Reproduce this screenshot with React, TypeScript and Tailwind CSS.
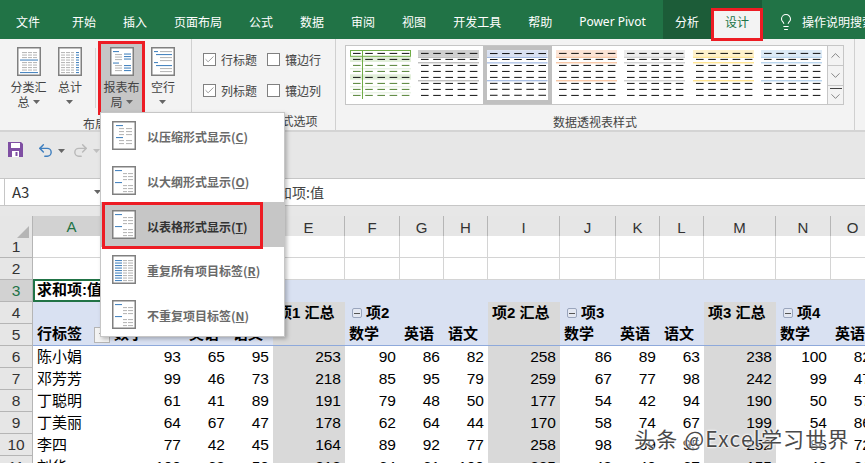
import { Check, ChevronDown, ChevronUp, Lightbulb, Redo2, Undo2 } from "lucide-react";
import React from "react";

const BLUE = "#4a86c0";
const GR = "#b9b9b9";

type Seg = [number, number, number, string];

function Doc({ segs, w = 24, h = 29 }: { segs: Seg[]; w?: number; h?: number }) {
  return (
    <svg width={w} height={h} viewBox="0 0 24 29" className="block shrink-0">
      <rect x="0.75" y="0.75" width="22.5" height="27.5" fill="#fff" stroke="#808080" strokeWidth="1.5" />
      {segs.map(([x, y, l, c], i) => (
        <rect key={i} x={x} y={y} width={l} height="1.1" fill={c} />
      ))}
    </svg>
  );
}

const rowsY = [5, 7.5, 10, 12.5, 15, 17.5, 20, 22.5, 25];
const subtotalIcon: Seg[] = rowsY.flatMap((y, i): Seg[] =>
  i === 3 || i === 8
    ? [[3, y, 18, BLUE]]
    : [[5, y, 5, GR], [11, y, 4, GR], [16, y, 4, GR]]
);
const totalIcon: Seg[] = rowsY.flatMap((y): Seg[] => [[3, y, 4, GR], [8, y, 4, GR], [13, y, 3, GR], [18, y, 3, BLUE]]);
const layoutIcon: Seg[] = [
  [3, 4, 6, BLUE], [14, 6.5, 7, BLUE], [14, 9, 7, BLUE], [14, 11.5, 7, BLUE],
  [5, 7, 7, GR], [5, 9.5, 7, GR], [5, 12, 7, GR],
  [3, 15.5, 6, BLUE], [5, 18, 7, GR], [14, 18, 7, BLUE], [5, 20.5, 7, GR], [14, 20.5, 7, BLUE], [5, 23, 7, GR], [14, 23, 7, BLUE],
];
const blankIcon: Seg[] = [
  [3, 4, 4, BLUE], [9, 4, 12, GR], [5, 7, 16, BLUE], [9, 10, 12, GR],
  [9, 13, 12, GR], [3, 15, 4, BLUE], [5, 18, 16, BLUE], [9, 21, 12, GR], [9, 24, 12, GR],
];
const compactIcon: Seg[] = [
  [4, 4, 7, BLUE], [7, 7, 5, GR], [14, 7, 6, GR], [7, 10, 5, GR], [14, 10, 6, GR], [7, 13, 5, GR], [14, 13, 6, GR],
  [4, 16, 7, BLUE], [7, 19, 5, GR], [14, 19, 6, GR], [7, 22, 5, GR], [14, 22, 6, GR],
];
const outlineIcon: Seg[] = [
  [3, 4, 7, BLUE], [11, 7, 4, GR], [16, 7, 5, GR], [11, 10, 4, GR], [16, 10, 5, GR], [11, 13, 4, GR], [16, 13, 5, GR],
  [3, 16, 7, BLUE], [11, 19, 4, GR], [16, 19, 5, GR], [11, 22, 4, GR], [16, 22, 5, GR], [11, 25, 4, GR], [16, 25, 5, GR],
];
const repeatIcon: Seg[] = rowsY.flatMap((y): Seg[] => [[3, y, 7, BLUE], [11, y, 4, GR], [16, y, 5, GR]]);

function Caret({ className = "" }: { className?: string }) {
  return (
    <svg width="7" height="4" viewBox="0 0 7 4" className={className}>
      <path d="M0 0h7L3.5 4z" fill="#666" />
    </svg>
  );
}

function RibbonButton({ segs, lines, width, top = "pt-[8px]" }: { segs: Seg[]; lines: React.ReactNode[]; width: string; top?: string }) {
  return (
    <div className={`flex flex-col items-center text-[12px] leading-[15px] text-[#444] ${top} ${width}`}>
      <Doc segs={segs} />
      <div className="mt-[3px] flex flex-col items-center">
        {lines.map((l, i) => (
          <div key={i} className="flex items-center gap-[3px] whitespace-nowrap">{l}</div>
        ))}
      </div>
    </div>
  );
}

function CheckItem({ label, on, w }: { label: string; on?: boolean; w: string }) {
  return (
    <div className={`flex items-center gap-[5px] text-[12px] text-[#444] ${w}`}>
      <span className="flex h-[13px] w-[13px] items-center justify-center border border-[#808080] bg-white">
        {on && <Check size={11} strokeWidth={1.6} color="#777" />}
      </span>
      <span className="whitespace-nowrap">{label}</span>
    </div>
  );
}

function Thumb({ band, line, selected }: { band: string; line: string; selected?: boolean }) {
  const ys = [3.3, 9.3, 15.3, 21.3, 27.3, 33.3, 39.3, 45.3];
  const inner = (
    <svg width="61" height="50" viewBox="0 0 61 50" className="block">
      <rect x="0" y="0" width="61" height="6.5" fill={band} />
      {[6.7, 12.3, 30.3].map((y) => (
        <rect key={y} x="0" y={y} width="61" height="1" fill={line} />
      ))}
      {ys.flatMap((y) =>
        [3, 15.2, 27.4, 39.6, 51.8].map((x) => <rect key={`${x}-${y}`} x={x} y={y - 0.4} width="7.6" height="1" fill="#111" />)
      )}
    </svg>
  );
  return selected ? (
    <div className="flex h-[58px] w-[68.6px] shrink-0 items-center justify-center border-[4px] border-[#c0c0c0] bg-white">{inner}</div>
  ) : (
    <div className="flex h-[58px] w-[68.6px] shrink-0 items-center justify-center">{inner}</div>
  );
}

function GreenThumb() {
  const ys: [number, string][] = [[3.3, "#111"], [9.3, "#111"], [15.3, "#548235"], [21.3, "#548235"], [27.3, "#111"], [33.3, "#548235"], [39.3, "#548235"], [45.3, "#548235"]];
  return (
    <div className="flex h-[58px] w-[68.6px] shrink-0 items-center justify-center">
      <svg width="61" height="50" viewBox="0 0 61 50" className="block">
        <rect x="0" y="6.7" width="61" height="5.3" fill="#e2efda" />
        <rect x="0" y="24.3" width="61" height="5.4" fill="#e2efda" />
        {[18.3, 36.3, 42.3].map((y) => (
          <rect key={y} x="0" y={y} width="61" height="1" fill="#e2efda" />
        ))}
        <rect x="0.5" y="0.5" width="60" height="5.8" fill="#fff" stroke="#70ad47" />
        <rect x="12" y="0" width="1" height="49" fill="#70ad47" />
        {ys.flatMap(([y, c]) =>
          [3, 15.2, 27.4, 39.6, 51.8].map((x) => <rect key={`${x}-${y}`} x={x} y={y - 0.4} width="7.6" height="1" fill={c} />)
        )}
      </svg>
    </div>
  );
}

function MenuItem({ segs, text, mn, active }: { segs: Seg[]; text: string; mn: string; active?: boolean }) {
  return (
    <div className={`relative flex h-[44.7px] items-center gap-[11px] pl-[11px] text-[12px] font-bold ${active ? "bg-[#c6c6c6] text-[#333]" : "text-[#6a6a6a]"}`}>
      <Doc segs={segs} />
      <span className="whitespace-nowrap pt-[4px]">
        {text}(<span className="underline">{mn}</span>)
      </span>
      {active && <div className="absolute left-[1px] top-0 h-[47px] w-[161px] border-[3px] border-[#ed1c24]" />}
    </div>
  );
}

const COLS = "grid w-[875px] grid-cols-[33px_77px_75px_44px_44px_72px_55px_44px_44px_72px_56px_44px_44px_72px_55px_44px]";
const LETTERS = ["A", "B", "C", "D", "E", "F", "G", "H", "I", "J", "K", "L", "M", "N", "O"];
const SUMMARY = [4, 8, 12];

const DATA: (string | number)[][] = [
  ["陈小娟", 93, 65, 95, 253, 90, 86, 82, 258, 86, 89, 63, 238, 100, 82],
  ["邓芳芳", 99, 46, 73, 218, 85, 95, 79, 259, 67, 77, 98, 242, 99, 47],
  ["丁聪明", 61, 41, 89, 191, 79, 48, 50, 177, 54, 42, 94, 190, 50, 57],
  ["丁美丽", 64, 67, 47, 178, 62, 64, 44, 170, 58, 74, 67, 199, 54, 86],
  ["李四", 77, 42, 45, 164, 89, 92, 77, 258, 98, 59, 95, 252, 86, 72],
  ["刘华", 100, 68, 50, 218, 64, 61, 100, 225, 48, 40, 67, 155, 48, 81],
];

function RowHead({ n, active }: { n: number; active?: boolean }) {
  return (
    <div className={`flex h-[22px] items-center justify-center border-b border-r border-[#b5b5b5] text-[15.5px] ${active ? "bg-[#d2d2d2] text-[#217346]" : "bg-[#e6e6e6] text-[#333]"}`}>
      {n}
    </div>
  );
}

function Minus() {
  return (
    <span className="mr-[4px] flex h-[10px] w-[10px] shrink-0 items-center justify-center rounded-[2px] border border-[#9aa5bd] bg-[#e4e8f2]">
      <span className="h-px w-[6px] bg-[#555]" />
    </span>
  );
}

export default function App() {
  return (
    <div className="relative h-[463px] w-[865px] overflow-hidden bg-[#e7e7e7] [font-family:'Noto_Sans_CJK_SC','Noto_Sans',sans-serif]">
      {/* tab bar */}
      <div className="flex h-[39px] items-stretch bg-[#217346] text-[12px] text-white">
        <div className="flex w-[663px] shrink-0 items-center gap-[27px] pl-[16px] pt-[5px]">
          <span className="mr-[5px]">文件</span>
          <span>开始</span>
          <span>插入</span>
          <span>页面布局</span>
          <span>公式</span>
          <span>数据</span>
          <span>审阅</span>
          <span>视图</span>
          <span>开发工具</span>
          <span>帮助</span>
          <span className="whitespace-nowrap [font-family:'Noto_Sans',sans-serif]">Power Pivot</span>
        </div>
        <div className="flex w-[99px] shrink-0 items-stretch bg-[#1c5c38]">
          <span className="ml-[12px] flex shrink-0 items-center whitespace-nowrap pt-[5px]">分析</span>
          <div className="relative ml-[14px] mt-[10px] flex h-[29px] w-[48px] shrink-0 items-center justify-center bg-[#f3f3f3] pb-[5px] text-[#217346]">
            设计
            <div className="absolute -inset-[2px] border-[3px] border-[#ed1c24]" />
          </div>
        </div>
        <div className="ml-[15px] flex items-center pt-[5px]">
          <Lightbulb size={18} strokeWidth={1.4} color="#fff" />
        </div>
        <span className="ml-[7px] flex items-center whitespace-nowrap pt-[5px]">操作说明搜索</span>
      </div>

      {/* ribbon */}
      <div className="flex h-[93px] border-b-2 border-[#d4d4d4] bg-[#f3f3f3]">
        <div className="flex w-[192px] shrink-0 flex-col border-r border-[#d0d0d0]">
          <div className="flex h-[75px] items-start pl-[5px]">
            <RibbonButton segs={subtotalIcon} lines={["分类汇", <>总<Caret /></>]} width="w-[47px]" />
            <RibbonButton segs={totalIcon} lines={["总计", <Caret className="mt-[6px]" />]} width="w-[36px]" />
            <div className="ml-[7px] mr-[1px] mt-[9px] h-[60px] w-px bg-[#d6d6d6]" />
            <div className="ml-[1px] mt-[2px] h-[74px] w-[47px] border-[3px] border-[#ed1c24] bg-[#c6c6c6]">
              <div className="-mx-[3px]">
                <RibbonButton segs={layoutIcon} lines={["报表布", <>局<Caret /></>]} width="w-[47px]" top="pt-[3px]" />
              </div>
            </div>
            <RibbonButton segs={blankIcon} lines={["空行", <Caret className="mt-[6px]" />]} width="w-[36px]" />
          </div>
          <div className="pl-[83px] pt-[1px] text-[12px] text-[#444]">布局</div>
        </div>
        <div className="flex w-[144px] shrink-0 flex-col border-r border-[#d0d0d0]">
          <div className="grid h-[75px] grid-cols-[64px_70px] content-start gap-y-[16px] pl-[11px] pt-[13px]">
            <CheckItem label="行标题" on w="h-[15px]" />
            <CheckItem label="镶边行" w="h-[15px]" />
            <CheckItem label="列标题" on w="h-[15px]" />
            <CheckItem label="镶边列" w="h-[15px]" />
          </div>
          <div className="pt-[1px] text-center text-[12px] text-[#444]">数据透视表样式选项</div>
        </div>
        <div className="flex w-[519px] shrink-0 flex-col border-r border-[#d0d0d0]">
          <div className="ml-[9px] mt-[6px] flex h-[60px] w-[499px] border border-[#c6c6c6] bg-white">
            <GreenThumb />
            <Thumb band="#d0d0d0" line="#a6a6a6" />
            <Thumb band="#d9e1f2" line="#8eaadb" selected />
            <Thumb band="#fce4d6" line="#f4b183" />
            <Thumb band="#ededed" line="#c0c0c0" />
            <Thumb band="#fff2cc" line="#ffd966" />
            <Thumb band="#ddebf7" line="#9dc3e6" />
            <div className="ml-auto flex w-[16px] flex-col border-l border-[#c6c6c6] bg-[#f3f3f3]">
              <div className="flex h-[20px] items-center justify-center border-b border-[#c6c6c6]">
                <ChevronUp size={15} strokeWidth={1} color="#444" />
              </div>
              <div className="flex h-[20px] items-center justify-center border-b border-[#c6c6c6]">
                <ChevronDown size={15} strokeWidth={1} color="#444" />
              </div>
              <div className="flex flex-1 flex-col items-center">
                <div className="mt-[2px] h-px w-[12px] bg-[#444]" />
                <ChevronDown size={15} strokeWidth={1} color="#444" />
              </div>
            </div>
          </div>
          <div className="pt-[8px] text-center text-[12px] text-[#444]">数据透视表样式</div>
        </div>
      </div>

      {/* quick access */}
      <div className="flex h-[46px] items-start pl-[8px] pt-[10px]">
        <svg width="15" height="15" viewBox="0 0 15 15" className="block">
          <path d="M0 0h13l2 2v13H0z" fill="#7f4fa3" />
          <rect x="3" y="1" width="9" height="5" fill="#fff" />
          <rect x="4" y="9" width="7" height="6" fill="#fff" />
          <rect x="7.5" y="10" width="2" height="4" fill="#7f4fa3" />
        </svg>
        <Undo2 size={17} strokeWidth={2} color="#3f7fbf" className="ml-[14px]" />
        <Caret className="ml-[4px] mt-[7px]" />
        <Redo2 size={17} strokeWidth={2} color="#b9b9b9" className="ml-[7px]" />
        <svg width="7" height="4" viewBox="0 0 7 4" className="ml-[4px] mt-[7px]">
          <path d="M0 0h7L3.5 4z" fill="#c0c0c0" />
        </svg>
      </div>

      {/* formula bar */}
      <div className="flex h-[28px] border-y border-[#c6c6c6] bg-white">
        <div className="-my-px ml-[4px] flex w-[100px] items-center justify-between border border-[#c6c6c6] bg-white pl-[7px] pr-[2px] text-[15px] text-[#333]">
          <span>A3</span>
          <Caret />
        </div>
        <div className="flex flex-1 items-center pl-[160px] text-[14px] text-[#444]">求和项:值</div>
      </div>
      <div className="h-[10px]" />

      {/* sheet */}
      <div className="[font-family:'Liberation_Sans','Noto_Sans_CJK_SC',sans-serif]">
        <div className={`${COLS} h-[20px]`}>
          <div className="relative border-r border-[#b5b5b5] bg-[#e6e6e6]">
            <svg width="12" height="12" viewBox="0 0 12 12" className="absolute bottom-[3px] right-[3px]">
              <path d="M12 0v12H0z" fill="#b5b5b5" />
            </svg>
          </div>
          {LETTERS.map((l, i) => (
            <div
              key={l}
              className={`flex items-center justify-center border-b text-[15px] ${i === 0 ? "border-b-2 border-[#217346] bg-[#d2d2d2] text-[#217346]" : "border-b-[#9a9a9a] border-r border-r-[#b5b5b5] bg-[#e6e6e6] text-[#333]"}`}
            >
              {l}
            </div>
          ))}
        </div>

        {[1, 2].map((n) => (
          <div key={n} className={COLS}>
            <RowHead n={n} />
            {LETTERS.map((l) => (
              <div key={l} className="h-[22px] border-b border-r border-[#d4d4d4] bg-white" />
            ))}
          </div>
        ))}

        <div className={COLS}>
          <RowHead n={3} active />
          <div className="col-span-2 h-[22px] bg-[#d9e1f2]">
            <div className="flex h-[23px] w-[77px] -translate-y-px items-center whitespace-nowrap border-2 border-[#217346] bg-white pl-[2px] text-[15px] font-bold text-black">
              求和项:值
            </div>
          </div>
          <div className="col-span-13 h-[22px] bg-[#d9e1f2]" />
        </div>

        <div className={COLS}>
          <RowHead n={4} />
          {LETTERS.map((l, i) => {
            const sum = SUMMARY.indexOf(i);
            const item = [5, 9, 13].indexOf(i);
            return (
              <div key={l} className={`flex h-[22px] items-center whitespace-nowrap text-[15px] font-bold text-black ${sum >= 0 ? "bg-[#d9d9d9] pl-[4px]" : "bg-[#d9e1f2] pl-[7px]"}`}>
                {sum >= 0 && `项${sum + 1} 汇总`}
                {item >= 0 && (
                  <>
                    <Minus />项{item + 2}
                  </>
                )}
              </div>
            );
          })}
        </div>

        <div className={COLS}>
          <RowHead n={5} />
          {LETTERS.map((l, i) => {
            const sum = SUMMARY.includes(i);
            const sub = ["数学", "英语", "语文"][(i - 1) % 4];
            return (
              <div key={l} className={`relative flex h-[22px] items-center whitespace-nowrap border-b border-[#8ea9db] pl-[4px] text-[15px] font-bold text-black ${sum ? "bg-[#d9d9d9]" : "bg-[#d9e1f2]"}`}>
                {i === 0 ? (
                  <>
                    行标签
                    <span className="absolute left-[61px] top-[3px] flex h-[16px] w-[16px] items-center justify-center border border-[#b5b5b5] bg-[#f3f3f3]">
                      <Caret />
                    </span>
                  </>
                ) : sum ? null : (
                  sub
                )}
              </div>
            );
          })}
        </div>

        {DATA.map((r, ri) => (
          <div key={ri} className={COLS}>
            <RowHead n={ri + 6} />
            {r.map((v, i) => (
              <div
                key={i}
                className={`flex h-[22px] items-center whitespace-nowrap text-black ${i === 0 ? "pl-[4px] text-[15px]" : "justify-end pr-[4px] text-[15.5px]"} ${SUMMARY.includes(i) ? "bg-[#d9d9d9]" : "bg-white"}`}
              >
                {v}
              </div>
            ))}
          </div>
        ))}
      </div>

      {/* dropdown menu */}
      <div className="absolute left-[100px] top-[112px] w-[185px] border border-[#c6c6c6] bg-white shadow-[2px_2px_4px_rgba(0,0,0,0.25)]">
        <MenuItem segs={compactIcon} text="以压缩形式显示" mn="C" />
        <MenuItem segs={outlineIcon} text="以大纲形式显示" mn="O" />
        <MenuItem segs={outlineIcon} text="以表格形式显示" mn="T" active />
        <MenuItem segs={repeatIcon} text="重复所有项目标签" mn="R" />
        <MenuItem segs={outlineIcon} text="不重复项目标签" mn="N" />
      </div>

      {/* watermark */}
      <div className="absolute left-[634px] top-[424px] whitespace-nowrap text-[21px] leading-[28px] tracking-[1.2px] text-[#4a4a4a] [text-shadow:0_0_2px_#fff,0_0_2px_#fff,0_0_3px_#fff]">
        头条 @Excel学习世界
      </div>
    </div>
  );
}
